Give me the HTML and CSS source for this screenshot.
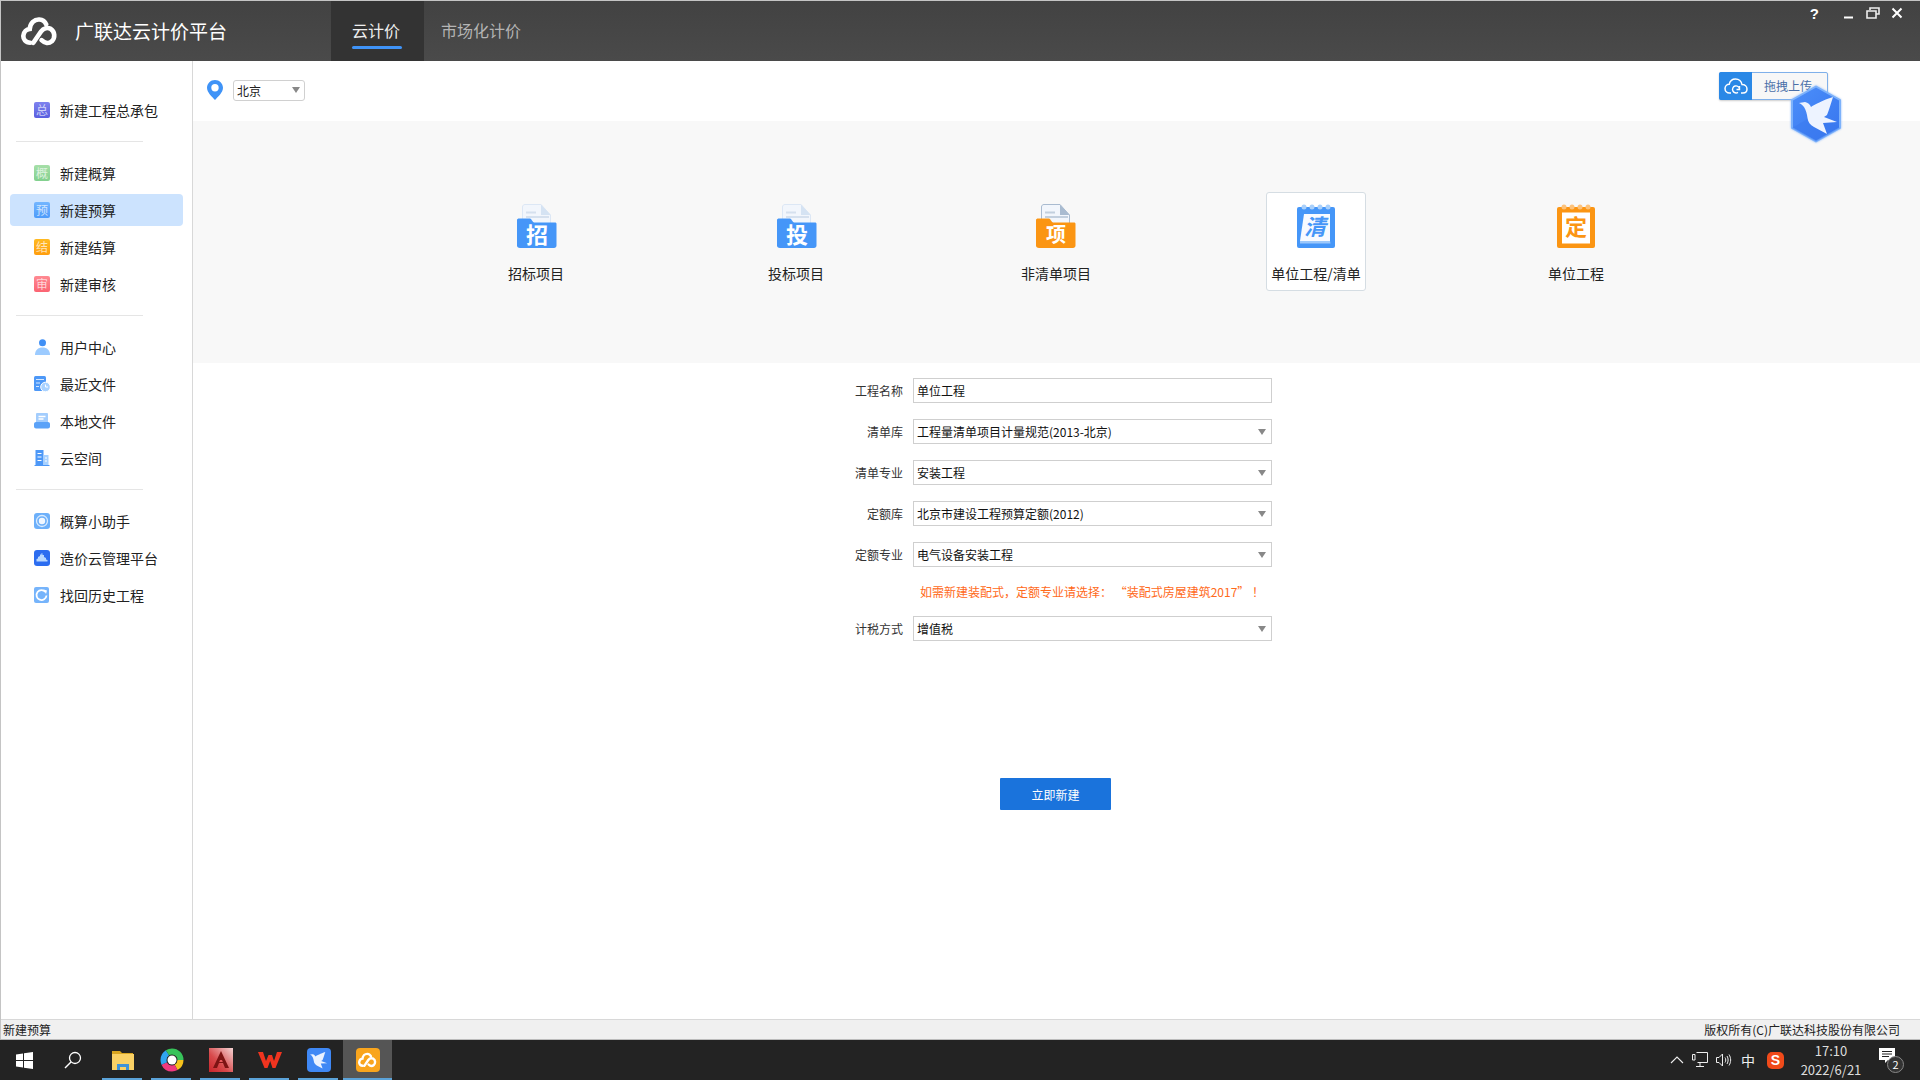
FILE: index.html
```html
<!DOCTYPE html>
<html lang="zh-CN">
<head>
    <meta charset="UTF-8">
    <title>广联达云计价平台</title>
    <link rel="stylesheet" href="styles.css">
</head>
<body>
    <svg class="defs" width="0" height="0">
        <defs>
            <symbol id="logo" viewBox="0 0 36 30">
                <path d="M9 26C4.500 26 2 22.500 2.300 19C2.700 15 5.500 12.800 8.500 12.500C9 7 13 3 17.800 3.300C21 3.500 23.500 5.500 24.500 8" fill="none" stroke="currentColor" stroke-width="4.500" stroke-linecap="round"/>
                <path d="M12 26L19.500 15C22 11.500 26 11 29 12.500C33 15 33.500 21 30 24.500C27 27 23 26.500 20 23.500" fill="none" stroke="currentColor" stroke-width="4.500" stroke-linecap="round"/>
            </symbol>
            <symbol id="bird" viewBox="0 0 40 40">
                <path d="M0 8L6 7C9 7.500 11 9.500 12 12C15 10 24 5 34 2C32 8 30 15 28 20L25 22L38 27L24 28L28 39L15 32C11 30 9 27 8.500 23C8 19 7 15 5 12C4 10.500 2 9 0 8Z" fill="currentColor"/>
            </symbol>
        </defs>
    </svg>

    <div class="window">
        <header class="titlebar">
            <svg class="logo"><use href="#logo"/></svg>
            <div class="app-name">广联达云计价平台</div>
            <nav class="tabs">
                <a class="tab active"><span>云计价</span></a>
                <a class="tab"><span>市场化计价</span></a>
            </nav>
            <div class="win-controls">
                <span class="win-help">?</span>
                <svg width="12" height="12" viewBox="0 0 12 12"><path d="M1 10.500H10" stroke="#fff" stroke-width="2"/></svg>
                <svg width="14" height="12" viewBox="0 0 14 12"><path d="M4 3V1H13V7H10M1 4H10V11H1Z" fill="none" stroke="#eee" stroke-width="1.600"/></svg>
                <svg width="12" height="12" viewBox="0 0 12 12"><path d="M1.500 1.500L10.500 10.500M10.500 1.500L1.500 10.500" stroke="#fff" stroke-width="2"/></svg>
            </div>
        </header>

        <div class="body">
            <aside class="sidebar">
                <a class="side-item"><i class="side-ico ico-purple">总</i>新建工程总承包</a>
                <div class="side-line"></div>
                <a class="side-item"><i class="side-ico ico-green">概</i>新建概算</a>
                <a class="side-item active"><i class="side-ico ico-blue">预</i>新建预算</a>
                <a class="side-item"><i class="side-ico ico-orange">结</i>新建结算</a>
                <a class="side-item"><i class="side-ico ico-red">审</i>新建审核</a>
                <div class="side-line"></div>
                <a class="side-item">
                    <svg class="side-svg" viewBox="0 0 16 16"><circle cx="8.500" cy="3.800" r="3.500" fill="#3f8ff5"/><path d="M1 16C1 11 4 8.500 8.500 8.500S16 11 16 16Z" fill="#9ccbff"/></svg>用户中心</a>
                <a class="side-item">
                    <svg class="side-svg" viewBox="0 0 16 16"><rect x="0" y="0" width="12" height="15" rx="1.500" fill="#4d98f7"/><path d="M2 3.500H10M2 7H6M2 10.500H5" stroke="#d6e8ff" stroke-width="1.200"/><circle cx="11.500" cy="11" r="4.800" fill="#a9d2ff" stroke="#fff"/><path d="M11.500 8.500V11H14" fill="none" stroke="#fff" stroke-width="1"/></svg>最近文件</a>
                <a class="side-item">
                    <svg class="side-svg" viewBox="0 0 16 16"><rect x="2" y="0" width="12" height="11" rx="1" fill="#a3cdfd"/><path d="M4.500 3.500H11.500M4.500 6H9.500" stroke="#fff" stroke-width="1.300"/><path d="M0 11C0 9.800 1 9 2 9H14C15 9 16 9.800 16 11V13.500C16 14.800 15 15.500 14 15.500H2C1 15.500 0 14.800 0 13.500Z" fill="#5aa2f8"/></svg>本地文件</a>
                <a class="side-item">
                    <svg class="side-svg" viewBox="0 0 16 16"><rect x="1.500" y="0" width="8" height="15" fill="#4d98f7"/><rect x="9.500" y="5" width="5" height="10" fill="#a9d2ff"/><path d="M3.500 3.500H7.500M3.500 7H7.500M3.500 10.500H7.500M11 8H13M11 11H13" stroke="#fff" stroke-width="1.200"/><path d="M0.500 15.500H15.500" stroke="#4d98f7" stroke-width="1"/></svg>云空间</a>
                <div class="side-line"></div>
                <a class="side-item">
                    <svg class="side-svg" viewBox="0 0 16 16"><rect width="16" height="16" rx="3" fill="#6db0fa"/><circle cx="8" cy="8" r="5.500" fill="none" stroke="#d8ebff" stroke-width="1.300"/><circle cx="8" cy="8" r="3.200" fill="#f2f8ff"/></svg>概算小助手</a>
                <a class="side-item">
                    <svg class="side-svg" viewBox="0 0 16 16"><rect width="16" height="16" rx="3" fill="#2c6df0"/><path d="M2.500 11.500V9L4 8.500V7L6 6V4.500H7.500V3L8.500 3.500V5H10V7L12 8V9.500L13.500 10V11.500Z" fill="#b8d8ff"/></svg>造价云管理平台</a>
                <a class="side-item">
                    <svg class="side-svg" viewBox="0 0 16 16"><rect width="15" height="16" rx="2" fill="#76b4fb"/><path d="M11.500 5A5 5 0 1 0 12.500 8.500" fill="none" stroke="#fff" stroke-width="1.800"/><path d="M9.500 2.500L13 3.500L12 7Z" fill="#fff"/></svg>找回历史工程</a>
            </aside>

            <main class="main">
                <div class="toolbar">
                    <svg class="pin" viewBox="0 0 16 20"><path d="M8 0C3.600 0 0 3.500 0 7.800C0 12.500 5 16.800 8 20C11 16.800 16 12.500 16 7.800C16 3.500 12.400 0 8 0Z" fill="#3f93f7"/><circle cx="8" cy="7.800" r="3.700" fill="#fff"/></svg>
                    <div class="area-select">北京<b class="arrow"></b></div>
                    <div class="upload">
                        <span class="upload-ico">
                            <svg width="24" height="16" viewBox="0 0 24 16"><path d="M7 15H5.500C3 15 1 13 1 10.500S3 6.200 5.200 6.200C6 3 8.500 1 11.500 1C15 1 17.500 3.500 18 6.500C20.800 6.500 23 8.300 23 11C23 13.300 21.500 15 19 15H17" fill="none" stroke="#fff" stroke-width="1.500"/><path d="M15.500 11A3.500 3.500 0 1 0 14 14.300M15.500 8V11.500H12.500" fill="none" stroke="#fff" stroke-width="1.400"/></svg>
                        </span>
                        <span class="upload-text">拖拽上传</span>
                    </div>
                </div>

                <section class="types">
                    <div class="type">
                        <svg class="type-ico folder" viewBox="0 0 40 44">
                            <path d="M5.500 3C5.500 1.500 6.500 .5 8 .5H24L33.500 11V26H5.500Z" fill="#f2f6fc" stroke="#dce7f5"/>
                            <path d="M24 .5V11H33.500Z" fill="#d5e3f3"/>
                            <path d="M9 8.500H19M9 13H32" stroke="#d5e0ee" stroke-width="2"/>
                            <path d="M0 16C0 15 1 14.500 2 14.500H13C14.500 14.500 15 17.500 17 18.500H38C39 18.500 39.500 19 39.500 20V41.500C39.500 43 38.500 44 37 44H3C1 44 0 43 0 41.500Z" fill="#4596f8"/>
                            <text x="20" y="38.500" class="type-char">招</text>
                        </svg>
                        <div>招标项目</div>
                    </div>
                    <div class="type">
                        <svg class="type-ico folder" viewBox="0 0 40 44">
                            <path d="M5.500 3C5.500 1.500 6.500 .5 8 .5H24L33.500 11V26H5.500Z" fill="#f2f6fc" stroke="#dce7f5"/>
                            <path d="M24 .5V11H33.500Z" fill="#d5e3f3"/>
                            <path d="M9 8.500H19M9 13H32" stroke="#d5e0ee" stroke-width="2"/>
                            <path d="M0 16C0 15 1 14.500 2 14.500H13C14.500 14.500 15 17.500 17 18.500H38C39 18.500 39.500 19 39.500 20V41.500C39.500 43 38.500 44 37 44H3C1 44 0 43 0 41.500Z" fill="#4596f8"/>
                            <text x="20" y="38.500" class="type-char">投</text>
                        </svg>
                        <div>投标项目</div>
                    </div>
                    <div class="type">
                        <svg class="type-ico" viewBox="0 0 40 44">
                            <path d="M5.500 3C5.500 1.500 6.500 .5 8 .5H24L33.500 11V26H5.500Z" fill="#f2f6fc" stroke="#a9bbd0"/>
                            <path d="M24 .5V11H33.500Z" fill="#a9bbd0"/>
                            <path d="M9 8.500H19M9 13H32" stroke="#c2cfde" stroke-width="2"/>
                            <path d="M0 16C0 15 1 14.500 2 14.500H13C14.500 14.500 15 17.500 17 18.500H38C39 18.500 39.500 19 39.500 20V41.500C39.500 43 38.500 44 37 44H3C1 44 0 43 0 41.500Z" fill="#fb9513"/>
                            <text x="20" y="38" class="type-char small">项</text>
                        </svg>
                        <div>非清单项目</div>
                    </div>
                    <div class="type selected">
                        <svg class="type-ico" viewBox="0 0 38 44">
                            <rect x="0" y="3" width="38" height="41" rx="2" fill="#4596f8"/>
                            <path d="M7 10H33V37H3Z" fill="#f7faff"/>
                            <path d="M3 37H33L33.500 39.500H3Z" fill="#9cc8fb"/>
                            <g fill="#a9d0fb"><circle cx="7" cy="3" r="2.500"/><circle cx="15" cy="3" r="2.500"/><circle cx="23" cy="3" r="2.500"/><circle cx="31" cy="3" r="2.500"/></g>
                            <text x="18" y="31" class="type-char clear-char">清</text>
                        </svg>
                        <div>单位工程/清单</div>
                    </div>
                    <div class="type">
                        <svg class="type-ico" viewBox="0 0 38 44">
                            <rect x="0" y="3" width="38" height="41" rx="2" fill="#fb9513"/>
                            <rect x="5" y="8.500" width="28" height="31" fill="#fff"/>
                            <g fill="#fdc27a"><circle cx="7" cy="3" r="2.500"/><circle cx="15" cy="3" r="2.500"/><circle cx="23" cy="3" r="2.500"/><circle cx="31" cy="3" r="2.500"/></g>
                            <text x="19" y="31" class="type-char fixed-char">定</text>
                        </svg>
                        <div>单位工程</div>
                    </div>
                </section>

                <form class="form">
                    <div class="row"><label>工程名称</label><input class="field" value="单位工程"></div>
                    <div class="row"><label>清单库</label><div class="field">工程量清单项目计量规范(2013-北京)<b class="arrow"></b></div></div>
                    <div class="row"><label>清单专业</label><div class="field">安装工程<b class="arrow"></b></div></div>
                    <div class="row"><label>定额库</label><div class="field">北京市建设工程预算定额(2012)<b class="arrow"></b></div></div>
                    <div class="row"><label>定额专业</label><div class="field">电气设备安装工程<b class="arrow"></b></div></div>
                    <p class="tip">如需新建装配式，定额专业请选择： “装配式房屋建筑2017” ！</p>
                    <div class="row"><label>计税方式</label><div class="field">增值税<b class="arrow"></b></div></div>
                </form>

                <button class="create" type="button">立即新建</button>
            </main>
        </div>

        <footer class="statusbar">
            <span>新建预算</span>
            <span class="copyright">版权所有(C)广联达科技股份有限公司</span>
        </footer>
    </div>

    <div class="taskbar">
        <div class="task start">
            <svg width="17" height="17" viewBox="0 0 17 17"><path d="M0 2.500L7 1.500V8H0ZM8 1.300L17 0V8H8ZM0 9H7V15.500L0 14.500ZM8 9H17V17L8 15.700Z" fill="#fff"/></svg>
        </div>
        <div class="task search">
            <svg width="18" height="18" viewBox="0 0 18 18"><circle cx="11" cy="7" r="5.500" fill="none" stroke="#fff" stroke-width="1.300"/><path d="M7 11L1 17" stroke="#fff" stroke-width="1.500"/></svg>
        </div>
        <div class="task open">
            <svg width="24" height="20" viewBox="0 0 24 20"><path d="M1 1H9L11 3H22V6H1Z" fill="#d9a520"/><rect x="1" y="4" width="22" height="16" fill="#fad165"/><rect x="6" y="14" width="12" height="3" fill="#3f93d8"/><rect x="6" y="14" width="3" height="6" fill="#3f93d8"/><rect x="15" y="14" width="3" height="6" fill="#3f93d8"/></svg>
        </div>
        <div class="task open">
            <svg width="24" height="24" viewBox="0 0 24 24">
                <circle cx="12" cy="12" r="8.500" fill="none" stroke="#f6c21c" stroke-width="6" stroke-dasharray="9 45" stroke-dashoffset="0"/>
                <circle cx="12" cy="12" r="8.500" fill="none" stroke="#f0397e" stroke-width="6" stroke-dasharray="14 45" stroke-dashoffset="-9"/>
                <circle cx="12" cy="12" r="8.500" fill="none" stroke="#2fa5f0" stroke-width="6" stroke-dasharray="12 45" stroke-dashoffset="-23"/>
                <circle cx="12" cy="12" r="8.500" fill="none" stroke="#37c35a" stroke-width="6" stroke-dasharray="19 45" stroke-dashoffset="-35"/>
                <circle cx="12" cy="12" r="4.500" fill="#fff"/>
            </svg>
        </div>
        <div class="task open">
            <svg width="24" height="24" viewBox="0 0 24 24">
                <defs><linearGradient id="cadfill" x1="1" y1="0" x2="0" y2="1"><stop offset="0" stop-color="#f4d4d4"/><stop offset=".6" stop-color="#d84a4c"/><stop offset="1" stop-color="#c8242a"/></linearGradient></defs>
                <rect width="24" height="24" fill="url(#cadfill)"/>
                <path d="M12 3L20 20H16L14 15H10L8 20H4Z" fill="#7d1414"/><path d="M11 12H13L13.800 14H10.200Z" fill="#e6595c"/>
            </svg>
        </div>
        <div class="task open">
            <svg width="24" height="18" viewBox="0 0 24 18"><path d="M0 1H5L8 10L10.500 4H14L16 10L19 1H24L17.500 17H14.500L12.200 10L9.500 17H6.500Z" fill="#f0341f"/></svg>
        </div>
        <div class="task open">
            <span class="bird-tile"><svg width="18" height="18"><use href="#bird"/></svg></span>
        </div>
        <div class="task open current">
            <span class="gld-tile"><svg width="19" height="16"><use href="#logo"/></svg></span>
        </div>

        <div class="tray">
            <svg width="14" height="8" viewBox="0 0 14 8"><path d="M1 7L7 1L13 7" fill="none" stroke="#eee" stroke-width="1.100"/></svg>
            <svg width="16" height="16" viewBox="0 0 16 16"><path d="M4.500 .5H15.500V10.500H5.500M.5 2.500H3V8H.5ZM8 10.500V14M4 14.500H12" fill="none" stroke="#eee"/></svg>
            <svg width="16" height="14" viewBox="0 0 16 14"><path d="M.5 4.500H3L6.500 1V13L3 9.500H.5Z M9 4.500C10 6 10 8 9 9.500M11 3C12.500 5.500 12.500 8.500 11 11M13 1.500C15.200 5 15.200 9 13 12.500" fill="none" stroke="#eee"/></svg>
            <span class="ime">中</span>
            <span class="sogou">S</span>
            <div class="clock"><div>17:10</div><div>2022/6/21</div></div>
            <div class="notice">
                <svg width="16" height="15" viewBox="0 0 16 15"><path d="M0 0H16V12H9L6 15V12H0Z" fill="#fff"/><path d="M3 3.500H13M3 6H13M3 8.500H10" stroke="#222"/></svg>
                <span class="notice-count">2</span>
            </div>
        </div>
    </div>

    <div class="float-bird">
        <svg width="52" height="58" viewBox="0 0 52 58">
            <defs><linearGradient id="hexfill" x1="0" y1="0" x2="1" y2="1"><stop offset="0" stop-color="#4c8ffa"/><stop offset="1" stop-color="#3775ee"/></linearGradient></defs>
            <path d="M26 1.500L50 15V43L26 56.500L2 43V15Z" fill="url(#hexfill)" stroke="#7db2fb" stroke-width="2" stroke-linejoin="round"/>
            <path d="M26 29L50 43L26 56.500L2 43Z" fill="#3a78ee" opacity=".45"/>
        </svg>
        <svg class="float-bird-mark"><use href="#bird"/></svg>
    </div>
</body>
</html>
```

FILE: styles.css
```css
* { box-sizing: border-box; }
html, body { margin: 0; height: 100%; }
body { width: 1920px; height: 1080px; overflow: hidden; position: relative; display: flex; flex-direction: column; background: #fff; color: #222; font-family: "Noto Sans CJK SC", "Liberation Sans", sans-serif; font-size: 12px; }
.defs { position: absolute; }
.window { flex: 1; min-height: 0; display: flex; flex-direction: column; border-top: 1px solid #c4c4c4; border-left: 1px solid #c4c4c4; }

/* title bar */
.titlebar { height: 60px; flex: none; display: flex; align-items: center; background: linear-gradient(#424242, #4a4a4a); color: #fff; }
.logo { width: 37px; height: 31px; margin-left: 20px; color: #fff; }
.app-name { width: 256px; margin: 0 0 2px 17px; font-size: 19px; }
.tabs { display: flex; height: 100%; }
.tab { height: 100%; display: flex; align-items: center; position: relative; font-size: 16px; color: #b4b4b4; padding: 0 17px 2px 17px; }
.tab.active { background: #333; color: #eee; width: 93px; padding: 0 0 2px 21px; }
.tab.active::after { content: ""; position: absolute; left: 21px; bottom: 12px; width: 50px; height: 3px; background: #3f93f7; border-radius: 2px; }
.win-controls { margin-left: auto; align-self: flex-start; display: flex; align-items: center; gap: 11px; height: 24px; padding-right: 17px; }
.win-help { font-size: 15px; font-weight: 700; margin-right: 13px; font-family: "Liberation Sans", sans-serif; }

/* body */
.body { flex: 1; min-height: 0; display: flex; }
.sidebar { width: 192px; flex: none; border-right: 1px solid #d8d8d8; padding: 30px 9px 0; }
.side-item { height: 37px; display: flex; align-items: center; padding-left: 24px; font-size: 14px; color: #222; border-radius: 4px; }
.side-item.active { height: 32px; margin: 3px 0 2px; background: #cce3fe; }
.side-ico { width: 16px; height: 16px; margin-right: 10px; flex: none; border-radius: 2px; color: rgba(255,255,255,0.7); font-style: normal; font-size: 12px; line-height: 16px; text-align: center; }
.side-svg { width: 16px; height: 16px; margin-right: 10px; flex: none; }
.ico-purple { background: linear-gradient(#7e82ee, #5a5fe0); }
.ico-green { background: linear-gradient(#a6dfa8, #82d08e); }
.ico-blue { background: linear-gradient(#74b6ff, #4d9bfa); }
.ico-orange { background: linear-gradient(#ffba22, #ff9d0d); }
.ico-red { background: linear-gradient(#ff8a92, #fb6472); }
.side-line { width: 127px; height: 1px; margin: 13px 0 12px 6px; background: #e5e5e5; }

/* main */
.main { flex: 1; min-width: 0; display: flex; flex-direction: column; }
.toolbar { height: 60px; flex: none; display: flex; align-items: flex-start; padding: 19px 92px 0 14px; }
.pin { width: 16px; height: 20px; margin-right: 10px; }
.area-select { width: 72px; height: 21px; position: relative; border: 1px solid #d0d0d0; border-radius: 3px; padding-left: 3px; line-height: 19px; color: #222; }
.area-select .arrow { right: 4px; top: 6px; }
.arrow { position: absolute; width: 0; height: 0; border: 4px solid transparent; border-top: 6px solid #888; border-bottom: 0; right: 5px; top: 9px; }
.upload { margin-left: auto; margin-top: -8px; width: 109px; height: 28px; display: flex; background: #f7f7f7; border: 1px solid #7fb0ea; border-radius: 2px; box-shadow: 0 1px 2px rgba(0,0,0,0.2); }
.upload-ico { width: 33px; margin: -1px 0 -1px -1px; display: flex; align-items: center; justify-content: center; background: #2a88e6; border-radius: 2px 0 0 2px; }
.upload-text { padding-left: 12px; line-height: 26px; color: #4a6fa8; }

.types { height: 242px; flex: none; display: grid; grid-template-columns: repeat(5, 260px); padding: 71px 0 0 213px; background: #f8f8f8; }
.type { justify-self: center; align-self: start; width: 100px; height: 99px; display: flex; flex-direction: column; align-items: center; padding-top: 11px; font-size: 14px; border: 1px solid transparent; border-radius: 3px; color: #222; }
.type.selected { background: #fff; border-color: #d5dde3; }
.type-ico { width: 40px; height: 44px; margin-bottom: 15px; }
.type-ico.folder { margin-left: 2px; }
.type-char { font-size: 22px; font-weight: 700; fill: #fff; text-anchor: middle; }
.type-char.small { font-size: 20px; }
.clear-char { fill: #4596f8; font-style: italic; }
.fixed-char { fill: #fb9513; }

.form { padding-top: 15px; width: 1080px; }
.row { height: 25px; margin-bottom: 16px; display: flex; align-items: center; }
.row label { width: 710px; text-align: right; margin-right: 10px; color: #333; }
.field { position: relative; width: 359px; height: 25px; border: 1px solid #cfcfcf; background: #fff; padding: 0 3px; font: inherit; line-height: 24px; color: #111; }
input.field { outline: none; }
.tip { margin: -1px 0 14px 727px; line-height: 20px; height: 20px; color: #ff6a1a; white-space: nowrap; }

.create { align-self: flex-start; margin: 121px 0 0 807px; width: 111px; height: 32px; border: 0; border-radius: 1px; background: #1a73dc; color: #fff; font: inherit; font-size: 12px; }

/* status bar */
.statusbar { height: 20px; flex: none; display: flex; justify-content: space-between; align-items: center; background: #f0f0f0; border-top: 1px solid #d8d8d8; padding: 0 20px 0 2px; color: #222; }

/* taskbar */
.taskbar { height: 41px; flex: none; display: flex; align-items: stretch; background: #232323; color: #eee; border-top: 1px solid #bbb; }
.task { width: 49px; display: flex; align-items: center; justify-content: center; position: relative; }
.task.open::after { content: ""; position: absolute; left: 4px; right: 5px; bottom: 0; height: 2px; background: #5ba3d9; }
.task.search { padding-right: 2px; }
.task.current { background: #555; }
.task.current::after { left: 0; right: 0; }
.bird-tile { width: 24px; height: 24px; border-radius: 4px; background: #3f88f5; color: #eaf2ff; display: flex; align-items: center; justify-content: center; }
.gld-tile { width: 24px; height: 24px; border-radius: 4px; background: #f9a51d; color: #fff; display: flex; align-items: center; justify-content: center; }
.tray { margin-left: auto; display: flex; align-items: center; gap: 8px; padding-right: 17px; }
.ime { font-size: 14px; margin-left: 1px; }
.sogou { width: 17px; height: 17px; margin-left: 4px; background: #f04a1a; border-radius: 5px; color: #fff; font: 700 14px/17px "Liberation Sans", sans-serif; text-align: center; }
.clock { width: 70px; margin-left: 4px; text-align: center; font-size: 13px; line-height: 19px; color: #ddd; }
.notice { position: relative; width: 24px; height: 24px; margin-left: 5px; }
.notice-count { position: absolute; left: 8px; top: 8px; width: 17px; height: 17px; border-radius: 50%; border: 1px solid #888; background: #333; color: #fff; font-size: 11px; line-height: 15px; text-align: center; }

/* downloader badge floating over the page */
.float-bird { position: absolute; left: 1790px; top: 85px; width: 52px; height: 58px; filter: drop-shadow(0 0 1px #8bb8fb); }
.float-bird-mark { position: absolute; left: 9px; top: 10px; width: 40px; height: 40px; color: #edf3ff; }
```
